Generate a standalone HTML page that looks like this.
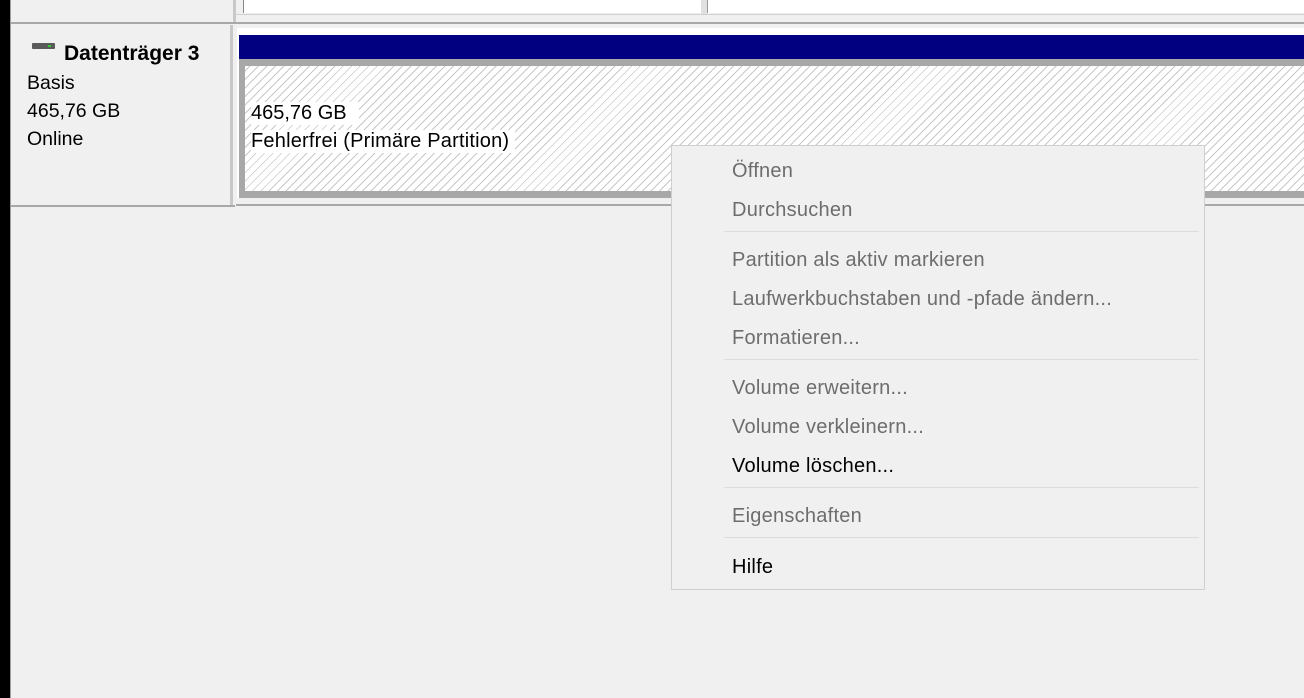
<!DOCTYPE html>
<html><head><meta charset="utf-8"><style>
*{margin:0;padding:0;box-sizing:border-box}
body{width:1304px;height:698px;background:#f0f0f0;position:relative;overflow:hidden;font-family:"Liberation Sans",sans-serif;color:#000}
.a{position:absolute}
.t{position:absolute;font-size:19.5px;white-space:nowrap}
.mi{position:absolute;left:732px;font-size:20px;letter-spacing:0.25px;color:#6d6d6d;white-space:nowrap}
.mi.e{color:#000}
.sep{position:absolute;left:724px;width:475px;height:1px;background:#dcdcdc}
</style></head><body>
<div class="a" style="left:0;top:0;width:10px;height:698px;background:#000"></div>
<div class="a" style="left:10px;top:0;width:1px;height:698px;background:#a0a0a0"></div>
<div class="a" style="left:233px;top:0;width:3px;height:24px;background:#c8c8c8"></div>
<div class="a" style="left:243px;top:0;width:458px;height:13px;background:#fff;border-left:1px solid #888"></div>
<div class="a" style="left:701px;top:0;width:6px;height:14px;background:#e0e0e0"></div>
<div class="a" style="left:707px;top:0;width:597px;height:13px;background:#fff;border-left:1px solid #999"></div>
<div class="a" style="left:236px;top:14px;width:1068px;height:1px;background:#d0d0d0"></div>
<div class="a" style="left:11px;top:22px;width:1293px;height:2px;background:#a8a8a8"></div>
<div class="a" style="left:11px;top:25px;width:222px;height:181px;background:#f0f0f0;border-right:3px solid #c8c8c8"></div>
<div class="a" style="left:32px;top:43px;width:23px;height:6px;background:#5a5a5a;border-radius:1px"></div>
<div class="a" style="left:48px;top:45px;width:3px;height:2px;background:#3c3"></div>
<div class="t" style="left:64px;top:42px;font-weight:bold;font-size:21px">Datenträger 3</div>
<div class="t" style="left:27px;top:72px">Basis</div>
<div class="t" style="left:27px;top:100px">465,76 GB</div>
<div class="t" style="left:27px;top:128px">Online</div>
<div class="a" style="left:11px;top:205px;width:224px;height:2px;background:#a8a8a8"></div>
<div class="a" style="left:237px;top:28px;width:1067px;height:176px;background:#fff"></div>
<div class="a" style="left:239px;top:35px;width:1065px;height:24px;background:#000080"></div>
<div class="a" style="left:239px;top:59px;width:1065px;height:139px;background:#a8a8a8"></div>
<div class="a" style="left:245px;top:66px;width:1059px;height:125px;background:#fff repeating-linear-gradient(135deg,#fff 0,#fff 3px,#c8c8c8 3px,#c8c8c8 4px,#fff 4px,#fff 6px)"></div>
<div class="a" style="left:236px;top:198px;width:1068px;height:6px;background:#f0f0f0"></div>
<div class="a" style="left:236px;top:204px;width:1068px;height:2px;background:#a8a8a8"></div>
<div class="t" style="left:251px;top:102px;background:#fff;padding-right:12px;font-size:20px">465,76 GB</div>
<div class="t" style="left:251px;top:130px;background:#fff;padding-right:6px;font-size:20px;letter-spacing:0.2px">Fehlerfrei (Primäre Partition)</div>
<div class="a" style="left:671px;top:145px;width:534px;height:445px;background:#f0f0f0;border:1px solid #cfcfcf"></div>
<div class="mi" style="top:160px">Öffnen</div>
<div class="mi" style="top:199px">Durchsuchen</div>
<div class="sep" style="top:231px"></div>
<div class="mi" style="top:249px">Partition als aktiv markieren</div>
<div class="mi" style="top:288px">Laufwerkbuchstaben und -pfade ändern...</div>
<div class="mi" style="top:327px">Formatieren...</div>
<div class="sep" style="top:359px"></div>
<div class="mi" style="top:377px">Volume erweitern...</div>
<div class="mi" style="top:416px">Volume verkleinern...</div>
<div class="mi e" style="top:455px">Volume löschen...</div>
<div class="sep" style="top:487px"></div>
<div class="mi" style="top:505px">Eigenschaften</div>
<div class="sep" style="top:537px"></div>
<div class="mi e" style="top:556px">Hilfe</div>
</body></html>
